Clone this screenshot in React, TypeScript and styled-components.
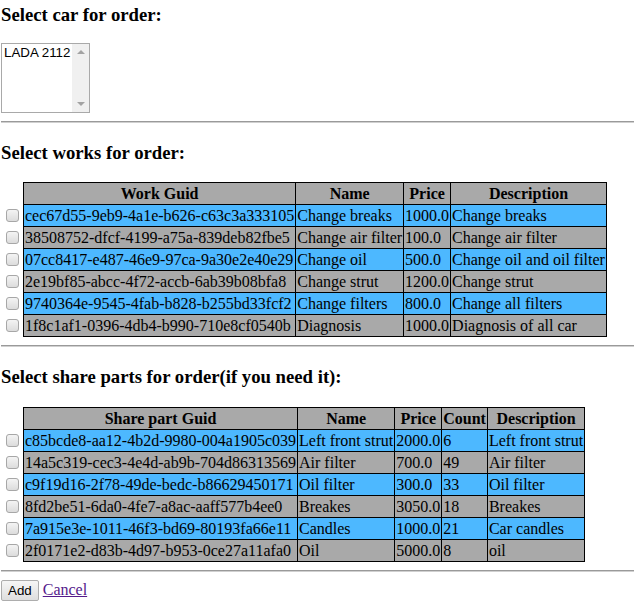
import React from "react";
import styled, { createGlobalStyle } from "styled-components";

const GlobalStyle = createGlobalStyle`
  body {
    margin: 0 1px;
    font-family: "Liberation Serif", "Times New Roman", serif;
    font-size: 16px;
    color: #000;
    background: #fff;
  }
`;

const Heading = styled.h3<{ $first?: boolean }>`
  font-size: 18.72px;
  font-weight: bold;
  margin: ${(p) => (p.$first ? "4px 0 17px" : "18.72px 0")};
`;

const CarList = styled.div`
  width: 87px;
  height: 68px;
  border: 1px solid #a9a9a9;
  margin-bottom: 1px;
  font-family: "Liberation Sans", Arial, sans-serif;
  font-size: 13.33px;
  display: flex;
`;

const CarOption = styled.div`
  flex: 1;
  min-width: 0;
  padding: 1px 2px;
  line-height: 15px;
  white-space: nowrap;
  overflow: hidden;
`;

const ScrollTrack = styled.div`
  flex: 0 0 17px;
  background: #f0f0f0;
  display: flex;
  flex-direction: column;
  justify-content: space-between;
  align-items: center;
  padding: 6px 0;
`;

const Arrow = styled.span<{ $down?: boolean }>`
  width: 0;
  height: 0;
  border-left: 4px solid transparent;
  border-right: 4px solid transparent;
  ${(p) =>
    p.$down
      ? "border-top: 4px solid #a3a3a3;"
      : "border-bottom: 4px solid #a3a3a3;"}
`;

const Rule = styled.hr`
  margin: 8px 0;
  border: none;
  border-top: 1px solid #9a9a9a;
  border-bottom: 1px solid #d0d0d0;
  height: 0;
`;

const Table = styled.table`
  border-collapse: collapse;
  border-spacing: 0;
`;

const HeadCell = styled.th`
  background: #a9a9a9;
  border: 1px solid #000;
  padding: 1px;
  line-height: 19px;
  font-weight: bold;
  text-align: center;
  white-space: nowrap;
`;

const Cell = styled.td<{ $alt: boolean }>`
  background: ${(p) => (p.$alt ? "#a9a9a9" : "#4db8ff")};
  border: 1px solid #000;
  padding: 1px;
  line-height: 19px;
  white-space: nowrap;
`;

const PickCell = styled.td`
  padding: 0 1px;
  border: none;
  background: transparent;
`;

const EmptyHead = styled.th`
  padding: 0;
  border: none;
  background: transparent;
`;

const Check = styled.input`
  appearance: none;
  display: block;
  width: 13px;
  height: 13px;
  margin: 3px 3px 3px 4px;
  border: 1px solid #a7a7a7;
  border-radius: 3px;
  background: linear-gradient(#f4f4f4, #dcdcdc);
`;

const Actions = styled.div`
  display: flex;
  align-items: center;
  gap: 4px;
`;

const Button = styled.button`
  font-family: "Liberation Sans", Arial, sans-serif;
  font-size: 13.33px;
  padding: 2px 6px;
  border: 1px solid #adadad;
  border-radius: 2px;
  background: linear-gradient(#f6f6f6, #dedede);
  color: #000;
`;

const Link = styled.a`
  color: #551a8b;
  text-decoration: underline;
  font-size: 16px;
`;

const works = [
  ["cec67d55-9eb9-4a1e-b626-c63c3a333105", "Change breaks", "1000.0", "Change breaks"],
  ["38508752-dfcf-4199-a75a-839deb82fbe5", "Change air filter", "100.0", "Change air filter"],
  ["07cc8417-e487-46e9-97ca-9a30e2e40e29", "Change oil", "500.0", "Change oil and oil filter"],
  ["2e19bf85-abcc-4f72-accb-6ab39b08bfa8", "Change strut", "1200.0", "Change strut"],
  ["9740364e-9545-4fab-b828-b255bd33fcf2", "Change filters", "800.0", "Change all filters"],
  ["1f8c1af1-0396-4db4-b990-710e8cf0540b", "Diagnosis", "1000.0", "Diagnosis of all car"],
];

const parts = [
  ["c85bcde8-aa12-4b2d-9980-004a1905c039", "Left front strut", "2000.0", "6", "Left front strut"],
  ["14a5c319-cec3-4e4d-ab9b-704d86313569", "Air filter", "700.0", "49", "Air filter"],
  ["c9f19d16-2f78-49de-bedc-b86629450171", "Oil filter", "300.0", "33", "Oil filter"],
  ["8fd2be51-6da0-4fe7-a8ac-aaff577b4ee0", "Breakes", "3050.0", "18", "Breakes"],
  ["7a915e3e-1011-46f3-bd69-80193fa66e11", "Candles", "1000.0", "21", "Car candles"],
  ["2f0171e2-d83b-4d97-b953-0ce27a11afa0", "Oil", "5000.0", "8", "oil"],
];

const OrderTable = ({ heads, rows }: { heads: string[]; rows: string[][] }) => (
  <Table>
    <thead>
      <tr>
        <EmptyHead />
        {heads.map((h) => (
          <HeadCell key={h}>{h}</HeadCell>
        ))}
      </tr>
    </thead>
    <tbody>
      {rows.map((r, i) => (
        <tr key={r[0]}>
          <PickCell>
            <Check type="checkbox" />
          </PickCell>
          {r.map((c, j) => (
            <Cell key={j} $alt={i % 2 === 1}>
              {c}
            </Cell>
          ))}
        </tr>
      ))}
    </tbody>
  </Table>
);

const App = () => {
  return (
    <>
      <GlobalStyle />
      <Heading $first>Select car for order:</Heading>
      <CarList role="listbox">
        <CarOption>LADA 2112</CarOption>
        <ScrollTrack>
          <Arrow />
          <Arrow $down />
        </ScrollTrack>
      </CarList>
      <Rule />
      <Heading>Select works for order:</Heading>
      <OrderTable heads={["Work Guid", "Name", "Price", "Description"]} rows={works} />
      <Rule />
      <Heading>Select share parts for order(if you need it):</Heading>
      <OrderTable
        heads={["Share part Guid", "Name", "Price", "Count", "Description"]}
        rows={parts}
      />
      <Rule />
      <Actions>
        <Button>Add</Button>
        <Link href="#">Cancel</Link>
      </Actions>
    </>
  );
};

export default App;
